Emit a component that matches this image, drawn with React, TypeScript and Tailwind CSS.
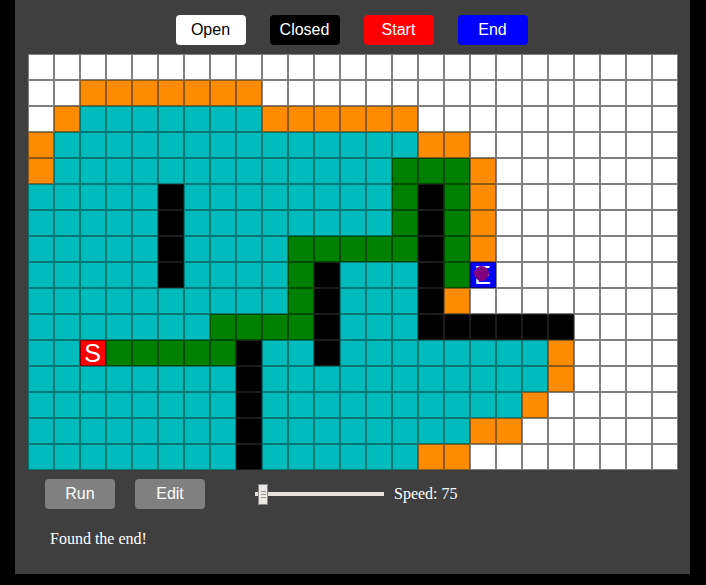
import React from "react";

const ROWS = [
  "wwwwwwwwwwwwwwwwwwwwwwwww",
  "wwooooooowwwwwwwwwwwwwwww",
  "wo" + "ccccccc" + "oooooo" + "wwwwwwwwww",
  "o" + "cccccccccccccc" + "oo" + "wwwwwwww",
  "o" + "ccccccccccccc" + "ggg" + "o" + "wwwwwww",
  "ccccc" + "b" + "cccccccc" + "gbgo" + "wwwwwww",
  "ccccc" + "b" + "cccccccc" + "gbgo" + "wwwwwww",
  "ccccc" + "b" + "cccc" + "ggggg" + "bgo" + "wwwwwww",
  "ccccc" + "b" + "cccc" + "gb" + "ccc" + "bgE" + "wwwwwww",
  "cccccccccc" + "gb" + "ccc" + "bo" + "wwwwwwww",
  "ccccccc" + "gggg" + "b" + "ccc" + "bbbbbb" + "wwww",
  "ccS" + "ggggg" + "b" + "cc" + "b" + "cccccccc" + "o" + "wwww",
  "cccccccc" + "b" + "ccccccccccc" + "o" + "wwww",
  "cccccccc" + "b" + "cccccccccc" + "o" + "wwwww",
  "cccccccc" + "b" + "cccccccc" + "oo" + "wwwwww",
  "cccccccc" + "b" + "cccccc" + "oo" + "wwwwwwww",
];

const CELL: Record<string, string> = {
  w: "bg-white border-[#808080]",
  o: "bg-[#ff8c00] border-[#8c5a14]",
  c: "bg-[#00bbbb] border-[#007777]",
  g: "bg-[#008000] border-[#004a00]",
  b: "bg-black border-[#1c1c1c]",
  S: "bg-[#ff0000] border-[#8a0000]",
  E: "bg-[#0000ff] border-[#00008a]",
};

function Cell({ t }: { t: string }) {
  return (
    <div className={`relative w-[26px] h-[26px] border flex items-center justify-center text-white text-[25px] leading-none ${CELL[t]}`}>
      {t === "S" && <span>S</span>}
      {t === "E" && (
        <>
          <span>E</span>
          <span className="absolute left-[3px] top-[3px] w-[15px] h-[15px] rounded-full bg-[#800080]" />
        </>
      )}
    </div>
  );
}

export default function App() {
  return (
    <div className="min-h-[585px] bg-black" style={{ fontFamily: '"Liberation Sans", Arial, sans-serif' }}>
      <div className="ml-[15px] w-[675px] h-[574px] bg-[#3f3f3f] flex flex-col items-center pt-[15px]">
        {/* Legend */}
        <div className="flex gap-6 -ml-[2px]">
          <div className="w-[70px] h-[30px] rounded bg-white text-black flex items-center justify-center text-base">Open</div>
          <div className="w-[70px] h-[30px] rounded bg-black text-white flex items-center justify-center text-base">Closed</div>
          <div className="w-[70px] h-[30px] rounded bg-[#ff0000] text-white flex items-center justify-center text-base">Start</div>
          <div className="w-[70px] h-[30px] rounded bg-[#0000ff] text-white flex items-center justify-center text-base">End</div>
        </div>

        {/* Grid */}
        <div className="mt-[9px] grid grid-cols-[repeat(25,26px)]">
          {ROWS.map((row, r) =>
            row.split("").map((t, c) => <Cell key={`${r}-${c}`} t={t} />)
          )}
        </div>

        {/* Controls */}
        <div className="self-start ml-[30px] mt-[9px] flex items-center">
          <button className="w-[70px] h-[30px] rounded bg-[#808080] text-white text-base">Run</button>
          <button className="ml-5 w-[70px] h-[30px] rounded bg-[#808080] text-white text-base">Edit</button>
          <div className="relative ml-[50px] w-[129px] h-[20px] flex items-center">
            <div className="w-full h-[4px] bg-[#e6e2dc]" />
            <div className="absolute left-[3px] top-0 w-[10px] h-[21px] bg-[#ece9e4] border border-[#8a8a8a] flex flex-col items-center justify-center gap-[2px]">
              <span className="w-[5px] h-px bg-[#9a9a9a]" />
              <span className="w-[5px] h-px bg-[#9a9a9a]" />
              <span className="w-[5px] h-px bg-[#9a9a9a]" />
            </div>
          </div>
          <span className="ml-[10px] text-white text-base" style={{ fontFamily: '"Liberation Serif", "Times New Roman", serif' }}>
            Speed: 75
          </span>
        </div>

        <p className="self-start ml-[35px] mt-[18px] text-white text-base" style={{ fontFamily: '"Liberation Serif", "Times New Roman", serif' }}>
          Found the end!
        </p>
      </div>
    </div>
  );
}
